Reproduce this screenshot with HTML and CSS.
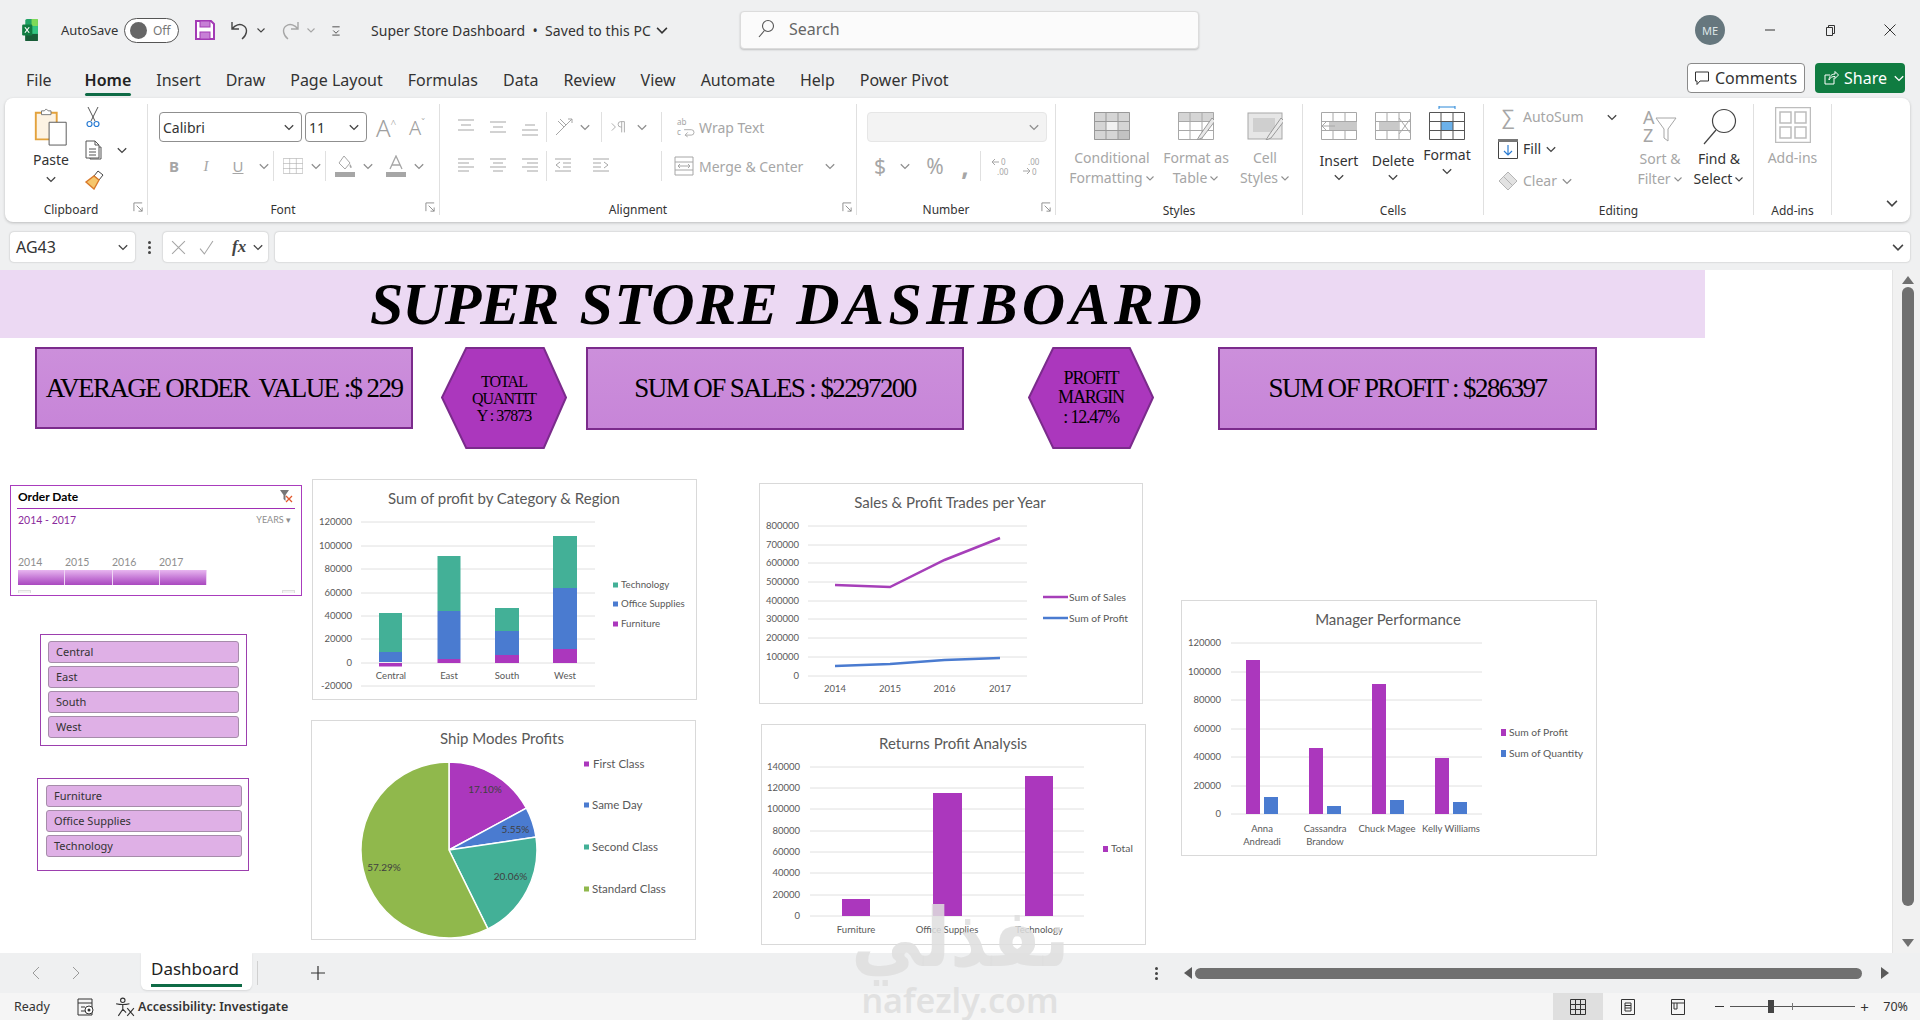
FILE: index.html
```html
<!DOCTYPE html>
<html lang="en">
<head>
<meta charset="utf-8">
<title>Super Store Dashboard</title>
<link rel="stylesheet" href="styles.css">
</head>
<body>
<svg class="defs" aria-hidden="true">
  <defs>
    <symbol id="chev" viewBox="0 0 10 10"><path d="M1.5 3.5 5 7l3.5-3.5" fill="none" stroke="currentColor" stroke-width="1.1"/></symbol>
    <symbol id="launch" viewBox="0 0 12 12"><path d="M1 10V1h9M4 4l6 6M10 6v4H6" fill="none" stroke="currentColor"/></symbol>
    <symbol id="al-top" viewBox="0 0 20 20"><path d="M2 3h16M5 8h10M2 13h16" stroke="currentColor" fill="none" stroke-width="1.2"/></symbol>
    <symbol id="al-mid" viewBox="0 0 20 20"><path d="M2 5h16M5 10h10M2 15h16" stroke="currentColor" fill="none" stroke-width="1.2"/></symbol>
    <symbol id="al-bot" viewBox="0 0 20 20"><path d="M5 8h10M2 13h16M2 18h16" stroke="currentColor" fill="none" stroke-width="1.2"/></symbol>
    <symbol id="al-left" viewBox="0 0 20 20"><path d="M2 3h16M2 7h11M2 11h16M2 15h11" stroke="currentColor" fill="none" stroke-width="1.2"/></symbol>
    <symbol id="al-center" viewBox="0 0 20 20"><path d="M2 3h16M5 7h10M2 11h16M5 15h10" stroke="currentColor" fill="none" stroke-width="1.2"/></symbol>
    <symbol id="al-right" viewBox="0 0 20 20"><path d="M2 3h16M7 7h11M2 11h16M7 15h11" stroke="currentColor" fill="none" stroke-width="1.2"/></symbol>
    <symbol id="grid" viewBox="0 0 36 28"><path d="M.5.5h35v27H.5zM12 .5v27M24 .5v27M.5 9.500h35M.5 18.500h35" fill="none" stroke="currentColor"/></symbol>
  </defs>
</svg>

<header class="titlebar">
  <div class="tb-left">
    <svg class="xl-logo" viewBox="0 0 20 28"><rect x="4" y="0" width="16" height="28" rx="2" fill="#21a366"/><rect x="12" y="0" width="8" height="9" fill="#7ed957"/><rect x="12" y="9" width="8" height="10" fill="#33c481"/><rect x="4" y="19" width="16" height="9" fill="#185c37"/><rect x="0" y="7" width="13" height="14" rx="1.500" fill="#107c41"/><path d="m3.500 10.500 5.500 7M9 10.500l-5.500 7" stroke="#fff" stroke-width="1.500"/></svg>
    <span class="autosave">AutoSave</span>
    <span class="toggle"><i class="knob"></i><b class="off">Off</b></span>
    <svg class="save" viewBox="0 0 20 20"><path d="M1 1h15l3 3v15H1z" fill="#fff" stroke="#a33bb5" stroke-width="2"/><rect x="5" y="1" width="10" height="6" fill="#c77fd6" stroke="#a33bb5"/><rect x="5" y="12" width="10" height="7" fill="#c77fd6" stroke="#a33bb5"/></svg>
    <svg class="qa undo" viewBox="0 0 20 20"><path d="M2 2v7h7M2 9c3-4 8-6 12-3 4 3 3 9-2 13" fill="none" stroke="#444" stroke-width="1.400"/></svg>
    <svg class="qc"><use href="#chev"/></svg>
    <svg class="qa redo" viewBox="0 0 20 20"><path d="M18 2v7h-7M18 9c-3-4-8-6-12-3-4 3-3 9 2 13" fill="none" stroke="#a6a6a6" stroke-width="1.400"/></svg>
    <svg class="qc dim"><use href="#chev"/></svg>
    <svg class="qm" viewBox="0 0 10 12"><path d="M1 2h8M2 6l3 3 3-3M1 11h8" fill="none" stroke="#444"/></svg>
    <span class="doc">Super Store Dashboard&nbsp; •&nbsp; Saved to this PC</span>
    <svg class="doc-chev"><use href="#chev"/></svg>
  </div>
  <div class="search">
    <svg class="search-ic" viewBox="0 0 18 20"><circle cx="11" cy="7" r="5.500" fill="none" stroke="#555" stroke-width="1.100"/><path d="M7.500 11.500 2 18" stroke="#555" stroke-width="1.100"/></svg>
    <span>Search</span>
  </div>
  <div class="tb-right">
    <span class="avatar">ME</span>
    <span class="win"><svg viewBox="0 0 14 14"><path d="M2 7h10" stroke="#333"/></svg></span>
    <span class="win"><svg viewBox="0 0 14 14"><path d="M3.500 4.500h6v8h-6zM5.500 4.500v-2h6v8h-2" fill="none" stroke="#333"/></svg></span>
    <span class="win"><svg viewBox="0 0 14 14"><path d="m1.500 1.500 11 11M12.500 1.500l-11 11" stroke="#333"/></svg></span>
  </div>
</header>

<nav class="tabs">
  <a>File</a><a class="on">Home</a><a>Insert</a><a>Draw</a><a>Page Layout</a><a>Formulas</a><a>Data</a><a>Review</a><a>View</a><a>Automate</a><a>Help</a><a>Power Pivot</a>
  <div class="tab-btns">
    <button class="comments"><svg viewBox="0 0 16 16"><path d="M1.500 2h13v9H6l-3 3.500V11H1.500z" fill="none" stroke="#333"/></svg>Comments</button>
    <button class="share"><svg viewBox="0 0 16 16"><path d="M11 8v6H2V5h5M6 10c0-4 3-6 6-6V1.500L15.500 5 12 8.500V6.500c-3 0-5 1-6 3.500z" fill="none" stroke="#fff"/></svg>Share<svg class="share-ch"><use href="#chev"/></svg></button>
  </div>
</nav>

<section class="ribbon">
  <div class="group g-clip">
    <div class="body clip-body">
      <div class="paste">
        <svg class="paste-ic" viewBox="0 0 34 40"><path d="M1 5h22v28H1z" fill="#fdf3e3" stroke="#e3a23c" stroke-width="2"/><path d="M7 7V3h3l2-2 2 2h3v4z" fill="#fff" stroke="#777"/><path d="M15 15h18v24H15z" fill="#fff" stroke="#555"/></svg>
        <span>Paste</span>
        <svg class="chev"><use href="#chev"/></svg>
      </div>
      <div class="clip-tools">
        <svg class="ct cut" viewBox="0 0 14 22"><path d="M2 1l7 14M12 1 5 15" stroke="#555" fill="none"/><circle cx="3.500" cy="18" r="2.500" fill="none" stroke="#2b7cd3" stroke-width="1.200"/><circle cx="10.500" cy="18" r="2.500" fill="none" stroke="#2b7cd3" stroke-width="1.200"/></svg>
        <div class="ct-row"><svg class="ct" viewBox="0 0 20 20"><path d="M2 1h9v4h4v13H2zM11 1l4 4M6 18v1h11V7h-2M5 9h7M5 12h7M5 15h7" fill="none" stroke="#555"/></svg><svg class="chev"><use href="#chev"/></svg></div>
        <svg class="ct" viewBox="0 0 20 20"><path d="M14 1l5 4-4 5-5-4z" fill="#fff" stroke="#444"/><path d="M10 6l5 4-5 9L2 12z" fill="#f6c66b" stroke="#d9792a" stroke-width="1.400"/></svg>
      </div>
    </div>
    <div class="label">Clipboard<svg class="launch"><use href="#launch"/></svg></div>
  </div>

  <div class="group g-font">
    <div class="body rows">
      <div class="row">
        <div class="combo wide">Calibri<svg class="chev dark"><use href="#chev"/></svg></div>
        <div class="combo narrow">11<svg class="chev dark"><use href="#chev"/></svg></div>
        <span class="big-a">A<sup>^</sup></span><span class="big-a small">A<sup>ˇ</sup></span>
      </div>
      <div class="row dim">
        <b class="t fb">B</b><i class="t fi">I</i><u class="t fu">U</u><svg class="chev"><use href="#chev"/></svg>
        <span class="vline"></span>
        <svg class="ic"><use href="#grid"/></svg><svg class="chev"><use href="#chev"/></svg>
        <span class="vline"></span>
        <svg class="ic fill-ic" viewBox="0 0 20 22"><path d="M9 1l6 7-5 6-6-6z" fill="none" stroke="#a6a6a6"/><path d="M15 9c2 2 2 4 1 4s-2-2-1-4z" fill="#a6a6a6"/><rect y="17" width="20" height="5" fill="#a6a6a6"/></svg><svg class="chev"><use href="#chev"/></svg>
        <svg class="ic color-ic" viewBox="0 0 20 22"><path d="M4 14 10 1l6 13M6 10h8" fill="none" stroke="#a6a6a6" stroke-width="1.300"/><rect y="17" width="20" height="5" fill="#a6a6a6"/></svg><svg class="chev"><use href="#chev"/></svg>
      </div>
    </div>
    <div class="label">Font<svg class="launch"><use href="#launch"/></svg></div>
  </div>

  <div class="group g-align">
    <div class="body rows">
      <div class="row dim">
        <svg class="ic a"><use href="#al-top"/></svg><svg class="ic a"><use href="#al-mid"/></svg><svg class="ic a"><use href="#al-bot"/></svg>
        <span class="vline"></span>
        <svg class="ic orient" viewBox="0 0 20 20"><path d="M2 18 18 2M14 2h4v4M4 4l6 6M6 2l6 6" fill="none" stroke="#a6a6a6"/></svg><svg class="chev ch-o"><use href="#chev"/></svg>
        <span class="vline"></span>
        <svg class="ic rtl" viewBox="0 0 20 20"><path d="M2 6l4 4-4 4M13 4v12M16 4v12M16 4h-4a3 3 0 0 0 0 6h1" fill="none" stroke="#a6a6a6"/></svg><svg class="chev ch-r"><use href="#chev"/></svg>
        <span class="vline"></span>
        <svg class="ic wrap" viewBox="0 0 20 22"><text x="1" y="9" class="wrap-t">ab</text><text x="1" y="20" class="wrap-t">c</text><path d="M9 14h8a2 2 0 0 1 0 6h-6M13 17l-3 3 3 2" fill="none" stroke="#a6a6a6"/></svg><span class="tool-text">Wrap Text</span>
      </div>
      <div class="row dim">
        <svg class="ic a"><use href="#al-left"/></svg><svg class="ic a"><use href="#al-center"/></svg><svg class="ic a"><use href="#al-right"/></svg>
        <span class="vline"></span>
        <svg class="ic a ind" viewBox="0 0 20 20"><path d="M2 3h16M10 7h8M10 11h8M2 15h16M7 6 3 9l4 3" fill="none" stroke="#a6a6a6"/></svg><svg class="ic a ind ind2" viewBox="0 0 20 20"><path d="M2 3h16M2 7h8M2 11h8M2 15h16M13 6l4 3-4 3" fill="none" stroke="#a6a6a6"/></svg>
        <span class="vline v-far"></span>
        <svg class="ic merge" viewBox="0 0 20 20"><path d="M1 1h18v18H1zM1 6h18M1 14h18M4 10h12M4 10l2-2M4 10l2 2M16 10l-2-2M16 10l-2 2" fill="none" stroke="#a6a6a6"/></svg><span class="tool-text">Merge &amp; Center</span><svg class="chev merge-ch"><use href="#chev"/></svg>
      </div>
    </div>
    <div class="label">Alignment<svg class="launch"><use href="#launch"/></svg></div>
  </div>

  <div class="group g-num">
    <div class="body rows">
      <div class="row"><div class="combo disabled"><svg class="chev"><use href="#chev"/></svg></div></div>
      <div class="row dim">
        <span class="t big">$</span><svg class="chev"><use href="#chev"/></svg>
        <span class="t big pct">%</span><span class="t big comma">,</span>
        <span class="vline"></span>
        <svg class="ic dec" viewBox="0 0 20 20"><path d="M1 6h7M1 6l3-3M1 6l3 3" fill="none" stroke="#a6a6a6"/><text x="10" y="9" class="dec-t">0</text><text x="6" y="19" class="dec-t">.00</text></svg>
        <svg class="ic dec" viewBox="0 0 20 20"><text x="6" y="9" class="dec-t">.00</text><path d="M1 15h7M8 15l-3-3M8 15l-3 3" fill="none" stroke="#a6a6a6"/><text x="10" y="19" class="dec-t">0</text></svg>
      </div>
    </div>
    <div class="label">Number<svg class="launch"><use href="#launch"/></svg></div>
  </div>

  <div class="group g-styles">
    <div class="body bigs dim">
      <div class="big-tool w-cf"><svg class="big-ic" viewBox="0 0 36 28"><rect width="36" height="28" fill="#d5d5d5"/><rect x="12" y="9" width="12" height="9" fill="#f1f1f1"/><rect x="24" y="18" width="12" height="10" fill="#c2c2c2"/><use href="#grid" width="36" height="28" color="#999"/></svg><span>Conditional<br>Formatting<svg class="chev inl"><use href="#chev"/></svg></span></div>
      <div class="big-tool w-ft"><svg class="big-ic" viewBox="0 0 36 28"><rect width="36" height="9" fill="#d5d5d5"/><use href="#grid" width="36" height="28" color="#a8a8a8"/><path d="M34 6 22 23l-3 5 5-2L37 9z" fill="#e8e8e8" stroke="#999"/></svg><span>Format as<br>Table<svg class="chev inl"><use href="#chev"/></svg></span></div>
      <div class="big-tool w-cs"><svg class="big-ic" viewBox="0 0 36 28"><rect x="1" y="1" width="34" height="26" fill="#e6e6e6" stroke="#a8a8a8"/><rect x="6" y="6" width="22" height="14" fill="#cfcfcf"/><path d="M34 6 22 23l-3 5 5-2L37 9z" fill="#e8e8e8" stroke="#999"/></svg><span>Cell<br>Styles<svg class="chev inl"><use href="#chev"/></svg></span></div>
    </div>
    <div class="label low">Styles</div>
  </div>

  <div class="group g-cells">
    <div class="body bigs cells">
      <div class="big-tool w-cell dim"><svg class="big-ic" viewBox="0 0 36 28"><use href="#grid" width="36" height="28" color="#a8a8a8"/><rect x="8" y="10" width="28" height="8" fill="#c9c9c9"/><path d="M14 14H1M6 9l-5 5 5 5" fill="none" stroke="#a8a8a8"/></svg><span class="lower">Insert</span><svg class="chev"><use href="#chev"/></svg></div>
      <div class="big-tool w-cell dim"><svg class="big-ic" viewBox="0 0 36 28"><use href="#grid" width="36" height="28" color="#a8a8a8"/><rect x="4" y="10" width="20" height="8" fill="#c9c9c9"/><path d="m24 6 12 16M36 6 24 22" stroke="#a8a8a8"/></svg><span class="lower">Delete</span><svg class="chev"><use href="#chev"/></svg></div>
      <div class="big-tool w-cell"><svg class="big-ic fmt-ic" viewBox="0 0 36 34"><path d="M10 1h16M10 0v3M26 0v3" stroke="#2b88d8"/><rect x="12" y="15" width="12" height="9" fill="#6cb1ea"/><g transform="translate(0 6)"><use href="#grid" width="36" height="28" color="#555"/></g></svg><span>Format</span><svg class="chev"><use href="#chev"/></svg></div>
    </div>
    <div class="label low">Cells</div>
  </div>

  <div class="group g-edit">
    <div class="body edit-body">
      <div class="edit-col">
        <div class="edit-row dim"><span class="sigma">∑</span><span>AutoSum</span><svg class="chev as-ch dark"><use href="#chev"/></svg></div>
        <div class="edit-row"><svg class="fill-down" viewBox="0 0 20 20"><path d="M.500.500h19v19H.500z" fill="#fff" stroke="#444"/><rect width="20" height="3" fill="#777"/><path d="M10 6v10M6 12l4 4 4-4" fill="none" stroke="#2b7cd3" stroke-width="1.200"/></svg><span>Fill</span><svg class="chev dark"><use href="#chev"/></svg></div>
        <div class="edit-row dim"><svg class="eraser" viewBox="0 0 20 20"><path d="m10 1 9 9-9 9-9-9z" fill="#e2e2e2" stroke="#b5b5b5"/><path d="m5.500 5.500 9 9" stroke="#b5b5b5"/></svg><span>Clear</span><svg class="chev"><use href="#chev"/></svg></div>
      </div>
      <div class="big-tool w-sort dim"><svg class="big-ic sort-ic" viewBox="0 0 36 36"><text x="1" y="16" class="az">A</text><text x="1" y="34" class="az">Z</text><path d="M14 10h20l-8 11v12l-4-3v-9z" fill="none" stroke="#a6a6a6"/></svg><span>Sort &amp;<br>Filter<svg class="chev inl"><use href="#chev"/></svg></span></div>
      <div class="big-tool w-find"><svg class="big-ic sort-ic" viewBox="0 0 36 36"><circle cx="23" cy="13" r="11.500" fill="none" stroke="#444" stroke-width="1.200"/><path d="M15 22 3 36" stroke="#444" stroke-width="1.200"/></svg><span>Find &amp;<br>Select<svg class="chev inl dark"><use href="#chev"/></svg></span></div>
    </div>
    <div class="label low">Editing</div>
  </div>

  <div class="group g-add">
    <div class="body bigs dim">
      <div class="big-tool w-add"><svg class="add-ic" viewBox="0 0 36 36"><path d="M.500.500h35v35H.500z" fill="none" stroke="#bdbdbd" stroke-width="1.500"/><path d="M5 5h11v11H5zM20 5h11v11H20zM5 20h11v11H5zM20 20h11v11H20z" fill="none" stroke="#bdbdbd" stroke-width="1.500"/></svg><span>Add-ins</span></div>
    </div>
    <div class="label low">Add-ins</div>
  </div>
  <svg class="collapse"><use href="#chev"/></svg>
</section>

<section class="formula">
  <div class="namebox">AG43<svg class="chev dark"><use href="#chev"/></svg></div>
  <div class="dots"><i></i><i></i><i></i></div>
  <div class="fx-box">
    <svg viewBox="0 0 14 14"><path d="m1 1 12 12M13 1 1 13" stroke="#a6a6a6"/></svg>
    <svg viewBox="0 0 14 14"><path d="m1 8 4 5 8-12" stroke="#a6a6a6" fill="none"/></svg>
    <em>fx</em>
    <svg class="chev dark"><use href="#chev"/></svg>
  </div>
  <div class="input"><svg class="chev dark"><use href="#chev"/></svg></div>
</section>

<main class="sheet">
  <div class="canvas">
    <div class="band"><h1><span class="w1">SUPER</span> <span class="w2">STORE</span> <span class="w3">DASHBOARD</span></h1></div>

    <div class="kpi k1">AVERAGE ORDER&nbsp; VALUE :$ 229</div>
    <div class="hex h1"><svg viewBox="0 0 125 101" preserveAspectRatio="none"><polygon points="25,1 102,1 124,50 102,100 25,100 1,50"/></svg><span>TOTAL<br>QUANTIT<br>Y : 37873</span></div>
    <div class="kpi k2">SUM OF SALES : $2297200</div>
    <div class="hex h2"><svg viewBox="0 0 125 101" preserveAspectRatio="none"><polygon points="25,1 101,1 124,50 101,100 25,100 1,50"/></svg><span>PROFIT<br>MARGIN<br>: 12.47%</span></div>
    <div class="kpi k3">SUM OF PROFIT : $286397</div>

    <div class="timeline">
      <div class="tl-head"><b>Order Date</b><svg viewBox="0 0 14 14"><path d="M1 1h9L6.500 6v6L4.500 10V6z" fill="#777"/><path d="m7 7 6 6M13 7l-6 6" stroke="#e2582c" stroke-width="1.300"/></svg></div>
      <div class="tl-sub"><span>2014 - 2017</span><small>YEARS ▾</small></div>
      <div class="tl-years"><span>2014</span><span>2015</span><span>2016</span><span>2017</span></div>
      <div class="tl-bar"><i></i><i></i><i></i><i></i></div>
      <div class="tl-handles"><i></i><i></i></div>
    </div>

    <div class="slicer s-region"><div class="sl-btn">Central</div><div class="sl-btn">East</div><div class="sl-btn">South</div><div class="sl-btn">West</div></div>
    <div class="slicer s-cat"><div class="sl-btn">Furniture</div><div class="sl-btn">Office Supplies</div><div class="sl-btn">Technology</div></div>

    <figure class="chart c-cat">
      <svg viewBox="312 479 385 221">
        <text class="ttl mid" x="504" y="498">Sum of profit by Category &amp; Region</text>
        <path class="gl" d="M361 522h234M361 546h234M361 569h234M361 593h234M361 616h234M361 639h234M361 663h234M361 686h234"/>
        <g class="ax end"><text x="352" y="522">120000</text><text x="352" y="546">100000</text><text x="352" y="569">80000</text><text x="352" y="593">60000</text><text x="352" y="616">40000</text><text x="352" y="639">20000</text><text x="352" y="663">0</text><text x="352" y="686">-20000</text></g>
        <g class="pur"><rect x="379" y="663" width="23" height="3.500"/><rect x="437.500" y="659" width="23" height="4"/><rect x="495" y="655" width="24" height="8"/><rect x="553" y="649" width="24" height="14"/></g>
        <g class="blu"><rect x="379" y="652" width="23" height="10"/><rect x="437.500" y="611" width="23" height="48"/><rect x="495" y="631" width="24" height="24"/><rect x="553" y="588" width="24" height="61"/></g>
        <g class="grn"><rect x="379" y="613" width="23" height="39"/><rect x="437.500" y="556" width="23" height="55"/><rect x="495" y="608" width="24" height="23"/><rect x="553" y="536" width="24" height="52"/></g>
        <g class="ax mid"><text x="391" y="676">Central</text><text x="449" y="676">East</text><text x="507" y="676">South</text><text x="565" y="676">West</text></g>
        <rect class="grn" x="613" y="582.500" width="5" height="5"/><rect class="blu" x="613" y="601.500" width="5" height="5"/><rect class="pur" x="613" y="621.500" width="5" height="5"/>
        <g class="ax lg"><text x="621" y="585">Technology</text><text x="621" y="604">Office Supplies</text><text x="621" y="624">Furniture</text></g>
      </svg>
    </figure>

    <figure class="chart c-sales">
      <svg viewBox="759 483 384 221">
        <text class="ttl mid" x="950" y="502">Sales &amp; Profit Trades per Year</text>
        <path class="gl" d="M808 526h219M808 545h219M808 563h219M808 582h219M808 601h219M808 619h219M808 638h219M808 657h219M808 676h219"/>
        <g class="ax end"><text x="799" y="526">800000</text><text x="799" y="545">700000</text><text x="799" y="563">600000</text><text x="799" y="582">500000</text><text x="799" y="601">400000</text><text x="799" y="619">300000</text><text x="799" y="638">200000</text><text x="799" y="657">100000</text><text x="799" y="676">0</text></g>
        <polyline class="ln-p" points="835,585 890,587 944.500,560 1000,538"/>
        <polyline class="ln-b" points="835,666 890,664 944.500,660 1000,658"/>
        <g class="ax mid"><text x="835" y="689">2014</text><text x="890" y="689">2015</text><text x="944.500" y="689">2016</text><text x="1000" y="689">2017</text></g>
        <path class="ln-p" d="M1043 597h25"/><path class="ln-b" d="M1043 618h25"/>
        <g class="ax lg ln"><text x="1069" y="598">Sum of Sales</text><text x="1069" y="619">Sum of Profit</text></g>
      </svg>
    </figure>

    <figure class="chart c-ship">
      <svg viewBox="311 720 385 220">
        <text class="ttl mid" x="502" y="738">Ship Modes Profits</text>
        <path class="pur wedge" d="M449 850V762A88 88 0 0 1 526.400 808.100Z"/>
        <path class="blu wedge" d="M449 850 526.400 808.100A88 88 0 0 1 536 837.100Z"/>
        <path class="grn wedge" d="M449 850 536 837.100A88 88 0 0 1 487.900 928.900Z"/>
        <path class="lim wedge" d="M449 850 487.900 928.900A88 88 0 1 1 449 762Z"/>
        <g class="ax mid pct"><text x="485" y="790">17.10%</text><text x="515.500" y="830">5.55%</text><text x="510.500" y="877">20.06%</text><text x="384" y="868">57.29%</text></g>
        <rect class="pur" x="584" y="761.500" width="5" height="5"/><rect class="blu" x="584" y="802.500" width="5" height="5"/><rect class="grn" x="584" y="844.500" width="5" height="5"/><rect class="lim" x="584" y="886.500" width="5" height="5"/>
        <g class="ax lg sp"><text x="593" y="764">First Class</text><text x="592" y="805">Same Day</text><text x="592" y="847">Second Class</text><text x="592" y="889">Standard Class</text></g>
      </svg>
    </figure>

    <figure class="chart c-ret">
      <svg viewBox="761 724 385 221">
        <text class="ttl mid" x="953" y="743">Returns Profit Analysis</text>
        <path class="gl" d="M810 767h274M810 788h274M810 809h274M810 831h274M810 852h274M810 873h274M810 895h274M810 916h274"/>
        <g class="ax end"><text x="800" y="767">140000</text><text x="800" y="788">120000</text><text x="800" y="809">100000</text><text x="800" y="831">80000</text><text x="800" y="852">60000</text><text x="800" y="873">40000</text><text x="800" y="895">20000</text><text x="800" y="916">0</text></g>
        <g class="pur"><rect x="842" y="899" width="28" height="17"/><rect x="933" y="793" width="29" height="123"/><rect x="1025" y="776" width="28" height="140"/></g>
        <g class="ax mid"><text x="856" y="930">Furniture</text><text x="947" y="930">Office Supplies</text><text x="1039" y="930">Technology</text></g>
        <rect class="pur" x="1103" y="846" width="5" height="6"/>
        <g class="ax lg ln"><text x="1111" y="849">Total</text></g>
      </svg>
    </figure>

    <figure class="chart c-mgr">
      <svg viewBox="1181 600 416 256">
        <text class="ttl mid" x="1388" y="619">Manager Performance</text>
        <path class="gl" d="M1231 643h251M1231 672h251M1231 700h251M1231 729h251M1231 757h251M1231 786h251M1231 814h251"/>
        <g class="ax end"><text x="1221" y="643">120000</text><text x="1221" y="672">100000</text><text x="1221" y="700">80000</text><text x="1221" y="729">60000</text><text x="1221" y="757">40000</text><text x="1221" y="786">20000</text><text x="1221" y="814">0</text></g>
        <g class="pur"><rect x="1246" y="660" width="14" height="154"/><rect x="1309" y="748" width="14" height="66"/><rect x="1372" y="684" width="14" height="130"/><rect x="1435" y="758" width="14" height="56"/></g>
        <g class="blu"><rect x="1264" y="797" width="14" height="17"/><rect x="1327" y="806" width="14" height="8"/><rect x="1390" y="800" width="14" height="14"/><rect x="1453" y="802" width="14" height="12"/></g>
        <g class="ax mid nm"><text x="1262" y="829">Anna</text><text x="1262" y="842">Andreadi</text><text x="1325" y="829">Cassandra</text><text x="1325" y="842">Brandow</text><text x="1387" y="829">Chuck Magee</text><text x="1451" y="829">Kelly Williams</text></g>
        <rect class="pur" x="1501" y="729" width="5" height="7"/><rect class="blu" x="1501" y="750" width="5" height="7"/>
        <g class="ax lg ln"><text x="1509" y="733">Sum of Profit</text><text x="1509" y="754">Sum of Quantity</text></g>
      </svg>
    </figure>
  </div>
  <aside class="vscroll"><i class="arrow-up"></i><i class="v-thumb"></i><i class="arrow-down"></i></aside>
</main>

<footer class="sheettabs">
  <svg class="nav" viewBox="0 0 10 16"><path d="M8 2 2 8l6 6" fill="none" stroke="#9a9a9a"/></svg>
  <svg class="nav n2" viewBox="0 0 10 16"><path d="m2 2 6 6-6 6" fill="none" stroke="#9a9a9a"/></svg>
  <div class="sheet-tab"><span>Dashboard</span></div>
  <span class="tab-sep"></span>
  <svg class="plus" viewBox="0 0 14 14"><path d="M7 0v14M0 7h14" stroke="#333" stroke-width="1.200"/></svg>
  <div class="dots d2"><i></i><i></i><i></i></div>
  <i class="arrow-left"></i>
  <i class="h-thumb"></i>
  <i class="arrow-right"></i>
</footer>

<footer class="status">
  <span class="ready">Ready</span>
  <svg class="st-ic macro" viewBox="0 0 18 18"><path d="M1 1h14v16H1zM1 5h14M4 9h4M4 13h4" fill="none" stroke="#333"/><circle cx="12" cy="12" r="4" fill="#fff" stroke="#333"/><circle cx="12" cy="12" r="1.500" fill="#333"/></svg>
  <svg class="st-ic acc" viewBox="0 0 18 18"><circle cx="7" cy="3" r="2" fill="none" stroke="#333"/><path d="M1 6c4 1 8 1 12 0M7 7v4L3 17M7 11l3 3M11 10l6 7M17 10l-6 7" fill="none" stroke="#333"/></svg>
  <b class="acc-text">Accessibility: Investigate</b>
  <div class="views">
    <span class="view on"><svg viewBox="0 0 16 16"><path d="M.500.500h15v15H.500zM5.500.500v15M10.500.500v15M.500 5.500h15M.500 10.500h15" fill="none" stroke="#333"/></svg></span>
    <span class="view"><svg viewBox="0 0 16 16"><path d="M1.500.500h13v15h-13zM5 4h6v8H5zM5 6.500h6M5 9h6" fill="none" stroke="#333"/></svg></span>
    <span class="view"><svg viewBox="0 0 16 16"><path d="M1.500.500h13v15h-13zM1.500 4h13M7 4v6H4V4" fill="none" stroke="#333"/></svg></span>
  </div>
  <span class="z-minus"></span>
  <div class="zoom-track"><i class="z-tick"></i><i class="z-thumb"></i></div>
  <span class="z-plus">+</span>
  <span class="z-val">70%</span>
</footer>

<div class="watermark" aria-hidden="true"><span class="wm-ar" lang="ar" dir="rtl">نفذلي</span><span class="wm-en">nafezly.com</span></div>
</body>
</html>
```

FILE: styles.css
```css
*{box-sizing:border-box}
html,body{margin:0;padding:0;height:1020px;overflow:hidden}
body{position:relative;background:#eff0f1;color:#333;font-family:"Noto Sans","Open Sans",sans-serif;font-size:14px}
.defs{position:absolute;width:0;height:0}
svg{display:block;flex:none}
.chev{width:12px;height:12px;color:#8f8f8f}
.chev.dark{color:#444}
.dim{color:#a6a6a6}

/* title bar */
.titlebar{height:60px;display:grid;grid-template-columns:740px 459px 1fr;align-items:start}
.tb-left{display:flex;align-items:center;height:60px;padding-left:20px}
.xl-logo{width:20px;height:22px}
.autosave{margin-left:21px;font-size:13px;width:55px}
.toggle{margin-left:8px;width:55px;height:25px;border:1px solid #555;border-radius:13px;display:flex;align-items:center;padding:0 5px;background:#fff}
.knob{width:17px;height:17px;border-radius:50%;background:#666}
.off{font-weight:400;font-size:12px;margin-left:6px;color:#777}
.save{width:20px;height:20px;margin-left:16px}
.qa{width:20px;height:20px}
.undo{margin-left:15px}
.redo{margin-left:14px}
.qc{width:10px;height:10px;margin-left:6px;color:#444}
.qc.dim{color:#a6a6a6}
.qm{width:10px;height:11px;margin-left:15px}
.doc{margin-left:30px;font-size:14px;white-space:nowrap;letter-spacing:.05px}
.doc-chev{width:14px;height:14px;margin-left:4px;color:#333}
.search{margin-top:11px;height:38px;background:#fbfbfb;border:1px solid #dcdcdc;border-radius:4px;box-shadow:0 1px 2px rgba(0,0,0,.2);display:flex;align-items:center;padding:0 0 2px 16px;gap:14px;color:#666;font-size:16px}
.search-ic{width:18px;height:22px}
.tb-right{display:flex;align-items:center;height:60px;padding-left:496px}
.avatar{width:30px;height:30px;border-radius:50%;background:#66777e;color:#dfe6e8;font-size:11px;display:flex;align-items:center;justify-content:center}
.win{width:60px;display:flex;justify-content:center;margin-left:0}
.avatar + .win{margin-left:15px}
.win svg{width:14px;height:14px}

/* tabs */
.tabs{height:38px;display:flex;align-items:center;padding-left:26px;gap:25px;font-size:16px;color:#333}
.tabs a{position:relative;white-space:nowrap;line-height:24px;margin-top:2px}
.tabs a.on{font-weight:600;color:#222;margin-left:8px}
.tabs a.on::after{content:"";position:absolute;left:0;right:0;bottom:-4px;height:3px;background:#0f6b46;border-radius:2px}
.tab-btns{margin-left:auto;margin-right:15px;display:flex;gap:10px;align-items:center;margin-top:-2px}
.tab-btns button{font:inherit;height:30px;border-radius:4px;display:flex;align-items:center;padding:0;white-space:nowrap}
.comments{width:118px;background:#fff;border:1px solid #8a8a8a;color:#333;padding-left:6px!important;gap:5px}
.comments svg{width:16px;height:16px}
.share{width:90px;background:#107c41;border:0;color:#fff;padding-left:8px!important;gap:5px}
.share svg{width:16px;height:16px}
.share .share-ch{width:12px;height:12px;color:#fff;margin-left:1px}

/* ribbon */
.ribbon{position:relative;height:124px;margin:0 10px 0 5px;background:#fff;border-radius:8px;box-shadow:0 1px 3px rgba(0,0,0,.22);display:flex;padding:6px 0 7px}
.group{display:flex;flex-direction:column;border-right:1px solid #e0e0e0;position:relative;flex:none}
.g-clip{width:143px}.g-font{width:292px}.g-align{width:417px}.g-num{width:199px}.g-styles{width:247px}.g-cells{width:181px}.g-edit{width:270px}.g-add{width:78px}
.body{flex:1;min-height:0}
.label{height:15px;font-size:12px;line-height:15px;text-align:center;color:#333;position:relative;top:2px;padding-right:10px}
.g-font .label{padding-right:21px}
.g-align .label,.g-num .label{padding-right:20px}
.label.low{top:3px;padding-right:0}
.launch{position:absolute;right:3px;top:0;width:11px;height:11px;color:#8a8a8a}
.collapse{position:absolute;right:11px;bottom:12px;width:14px;height:14px;color:#444}

.clip-body{display:flex;padding-left:15px}
.paste{width:62px;display:flex;flex-direction:column;align-items:center;padding-top:4px;font-size:14px}
.paste-ic{width:34px;height:38px}
.paste span{margin-top:4px;line-height:20px}
.paste .chev{margin-top:3px;color:#444}
.clip-tools{padding-left:2px;display:flex;flex-direction:column}
.ct{width:20px;height:20px;margin-bottom:12px}
.ct.cut{margin-left:2px;margin-top:2px;height:22px;width:14px;margin-bottom:10px}
.ct-row{display:flex;gap:5px;height:20px;align-items:center;margin-top:2px;margin-bottom:10px}
.ct-row .ct{margin:0}
.ct-row .chev{margin-left:7px;color:#444}

.rows{display:flex;flex-direction:column;gap:9px;padding:8px 0 0 10px}
.row{display:flex;align-items:center;height:30px}
.combo{height:30px;border:1px solid #8f8f8f;border-radius:4px;display:flex;align-items:center;justify-content:space-between;padding:0 3px;font-size:14px;color:#333}
.wide{width:143px;margin-left:1px}
.narrow{width:62px;margin-left:3px}
.big-a{font-size:24px;color:#a0a0a0;margin-left:9px;width:26px;font-weight:300}
.big-a.small{font-size:20px;margin-left:7px}
.big-a sup{font-size:10px;line-height:0}
.t{width:32px;text-align:center;font-size:15px;color:#a6a6a6;display:block}
.fb{font-family:"Noto Sans",sans-serif}
.fi{font-family:"Liberation Serif",serif}
.vline{width:1px;height:30px;background:#e0e0e0;flex:none}
.ic{width:20px;height:20px;color:#a6a6a6}
.row .chev{margin:0 3px 0 4px}
.g-font .ic{margin-left:9px}
.g-font .ic + .chev{margin-left:7px}
.fill-ic,.color-ic{height:22px}
.a{width:20px;margin:0 6px 0 6px}
.g-align .orient{margin-left:7px}
.row .ch-o{margin:0 10px 0 5px}
.g-align .rtl{margin-left:8px;width:18px}
.row .ch-r{margin:0 13px 0 8px}
.g-align .wrap{margin-left:14px;width:18px;overflow:visible}
.wrap-t{font-size:9px;fill:#a6a6a6}
.tool-text{font-size:14px;color:#a6a6a6;margin-left:5px;white-space:nowrap}
.g-align .ind2{margin-left:12px}
.v-far{margin-left:44px}
.g-align .merge{margin-left:12px}
.row .merge-ch{margin-left:21px}
.g-num .combo.disabled{width:180px;background:#f3f3f3;border-color:#e6e6e6;justify-content:flex-end}
.big{font-size:21px;width:30px}
.g-num .row:last-child{margin-left:-2px}
.pct{margin-left:6px}
.comma{font-weight:700;font-size:26px;line-height:20px}
.dec{margin-left:9px;width:22px;overflow:visible}
.dec-t{font-size:8px;fill:#a6a6a6}

.bigs{display:flex;padding-top:8px}
.big-tool{display:flex;flex-direction:column;align-items:center;text-align:center;font-size:14px;line-height:20px;flex:none}
.big-tool span{white-space:nowrap}
.big-ic{width:36px;height:28px;margin-bottom:8px;color:#a8a8a8}
.inl{display:inline-block;width:10px;height:10px;margin-left:2px;vertical-align:0}
.g-styles .bigs{padding-left:11px}
.w-cf{width:90px}.w-ft{width:78px}.w-cs{width:60px}
.cells{padding-left:9px;padding-top:8px}
.w-cell{width:54px;color:#333}
.w-cell.dim{color:#333}
.w-cell .chev{color:#444}
.lower{margin-top:3px}
.fmt-ic{height:34px;margin-top:-6px;margin-bottom:5px}
.edit-body{display:flex;padding-left:14px}
.edit-col{width:132px;display:flex;flex-direction:column;gap:11px;padding-top:2px}
.edit-row{display:flex;align-items:center;height:21px;font-size:14px;position:relative;gap:5px;white-space:nowrap}
.edit-row .chev{margin-left:-1px}
.edit-row .as-ch{margin-left:17px}
.sigma{font-size:20px;width:20px;text-align:center;color:#a6a6a6}
.fill-down,.eraser{width:20px;height:20px}
.w-sort,.w-find{width:60px;padding-top:4px}
.w-find{width:58px;color:#333}
.big-ic.sort-ic{height:36px;margin-bottom:5px;overflow:visible}
.az{font-size:18px;fill:#a6a6a6}
.w-find span,.w-sort span{line-height:20px}
.g-add .bigs{padding-top:3px;justify-content:center}
.add-ic{width:36px;height:36px;margin-bottom:5px}
.w-add{font-size:14px}

/* formula bar */
.formula{height:30px;margin:10px 10px 8px 10px;display:flex;align-items:stretch}
.namebox,.fx-box,.input{background:#fff;border-radius:4px;box-shadow:0 0 2px rgba(0,0,0,.28)}
.namebox{width:125px;display:flex;align-items:center;justify-content:space-between;padding:0 6px;font-size:16px}
.dots{width:28px;display:flex;flex-direction:column;gap:2px;align-items:center;justify-content:center}
.dots i{width:3px;height:3px;background:#444;border-radius:50%}
.fx-box{width:105px;display:flex;align-items:center;padding-left:8px;gap:13px}
.fx-box svg:not(.chev){width:15px;height:15px}
.fx-box em{font:italic 700 17px "Liberation Serif",serif;color:#444;width:16px;margin-left:5px}
.fx-box .chev{margin-left:-9px}
.input{flex:1;margin-left:7px;display:flex;align-items:center;justify-content:flex-end;padding-right:5px}
.input .chev{width:14px;height:14px}

/* sheet */
.sheet{height:683px;display:flex}
.canvas{position:relative;width:1893px;background:#fff;overflow:hidden;border-right:1px solid #e4e4e4}
.band{height:68px;width:1705px;background:#ecd9f3;padding-left:370px}
.band h1{margin:0;font:italic 700 60px/68px "Liberation Serif",serif;color:#000;white-space:nowrap;letter-spacing:-1px}
.w1{margin-right:7px}
.w2{margin-right:3px;letter-spacing:1.500px}
.w3{letter-spacing:4.450px}
.vscroll{flex:1;position:relative;background:#f1f1f1}
.v-thumb{position:absolute;left:9px;top:17px;width:12px;height:619px;background:#707070;border-radius:6px}
.arrow-up,.arrow-down{position:absolute;left:9px;width:0;height:0;border-left:6px solid transparent;border-right:6px solid transparent}
.arrow-up{top:6px;border-bottom:8px solid #707070}
.arrow-down{bottom:6px;border-top:8px solid #707070}

.kpi{position:absolute;top:77px;height:83px;background:linear-gradient(180deg,#cc8fdb,#c785d8);border:2px solid #7b2b8c;display:flex;align-items:center;justify-content:center;font:400 27px "Liberation Serif",serif;color:#000;white-space:nowrap;letter-spacing:-1.600px}
.k1{left:35px;width:378px;height:82px}
.k2{left:586px;width:378px}
.k3{left:1218px;width:379px}
.hex{position:absolute;top:77px;height:102px;display:flex;align-items:center;justify-content:center;text-align:center;font:400 16px/17px "Liberation Serif",serif;color:#000;letter-spacing:-1px}
.hex svg{position:absolute;inset:0;width:100%;height:100%}
.hex polygon{fill:#ab37bd;stroke:#7b2b8c;stroke-width:2}
.hex span{position:relative}
.h1{left:441px;width:126px}
.h2{left:1028px;width:126px;font-size:18px;line-height:19.500px;letter-spacing:-1.200px}

.timeline{position:absolute;left:10px;top:215px;width:292px;height:111px;border:1.500px solid #a93cbd;padding:0 6px;background:#fff}
.tl-head{height:23px;display:flex;justify-content:space-between;align-items:center;border-bottom:1px solid #a02fb4;font-size:11px;color:#000;font-family:Lato,sans-serif;padding-bottom:2px}
.tl-head b{font-size:12px;margin-left:1px}
.tl-head svg{width:14px;height:14px;margin-right:2px}
.tl-sub{display:flex;justify-content:space-between;align-items:center;margin:3px 0 0 1px;height:15px;font:10.500px Lato,sans-serif;color:#8a2a9c}
.tl-sub small{font-size:9px;color:#8e8e8e;margin-right:4px}
.tl-years{display:flex;margin:29px 0 0 1px;font:10.500px Lato,sans-serif;color:#8e8e8e}
.tl-years span{width:47px}
.tl-bar{display:flex;margin:2px 0 0 1px;width:189px;height:15px}
.tl-bar i{flex:1;background:linear-gradient(180deg,#e8b6f0,#c070d2 60%,#a948bf);border-right:1px solid #efd6f4}
.tl-handles{display:flex;justify-content:space-between;margin:5px 0 0 1px}
.tl-handles i{width:13px;height:3px;background:#f3f3f3;border:1px solid #ddd;border-bottom:0}

.slicer{position:absolute;background:#fff;border:1px solid #9c3fae;display:flex;flex-direction:column;gap:3px;padding-top:6px}
.s-region{left:40px;top:364px;width:207px;height:112px;padding-left:7px}
.s-cat{left:37px;top:508px;width:212px;height:93px;padding-left:8px}
.s-region .sl-btn{width:191px}
.s-cat .sl-btn{width:196px}
.sl-btn{height:22px;background:#dfb0e6;border:1px solid #a68caa;border-radius:3px;display:flex;align-items:center;padding:0 0 2px 7px;font:11px "Noto Sans",sans-serif;color:#333}

.chart{position:absolute;margin:0;background:#fff;outline:1px solid #d9d9d9;outline-offset:-1px}
.chart svg{width:100%;height:100%}
.c-cat{left:312px;top:209px;width:385px;height:221px}
.c-sales{left:759px;top:213px;width:384px;height:221px}
.c-ship{left:311px;top:450px;width:385px;height:220px}
.c-ret{left:761px;top:454px;width:385px;height:221px}
.c-mgr{left:1181px;top:330px;width:416px;height:256px}
.ttl{font:15px Lato,sans-serif;fill:#595959;dominant-baseline:central}
.ax text{font:9.500px Lato,sans-serif;fill:#595959;dominant-baseline:central;transform:translateY(-1px)}
.ax.lg text{font-size:9.700px}
.ax.lg.ln text{font-size:10.300px}
.ax.lg.sp text{font-size:11.500px}
.ax.pct text{fill:#404040;font-size:10px}
.mid,.mid text{text-anchor:middle}
.end text{text-anchor:end}
.gl{stroke:#e0e0e0;stroke-width:1;fill:none}
.pur{fill:#ab37bd}
.blu{fill:#4a7bd0}
.grn{fill:#43b097}
.lim{fill:#90b84c}
.wedge{stroke:#fff;stroke-width:1.500}
.ln-p,.ln-b{fill:none;stroke-width:2.500}
.ln-p{stroke:#a63fb9}
.ln-b{stroke:#4a7bd0}

/* sheet tabs */
.sheettabs{height:40px;display:flex;align-items:center;background:#eff0f1}
.nav{width:10px;height:16px;margin-left:31px}
.nav.n2{margin-left:30px}
.sheet-tab{margin-left:60px;width:111px;height:37px;margin-top:-3px;background:#fff;border-radius:0 0 6px 6px;padding:4px 0 0 10px;box-shadow:0 1px 2px rgba(0,0,0,.1);font-size:17px;line-height:24px;color:#222}
.sheet-tab span{display:inline-block;border-bottom:3px solid #0f6b46;padding-bottom:3px;width:91px;white-space:nowrap}
.tab-sep{width:1px;height:24px;background:#d0d0d0;margin-left:5px}
.plus{width:14px;height:14px;margin-left:53px}
.dots.d2{margin-left:828px;width:6px}
.arrow-left,.arrow-right{width:0;height:0;border-top:6px solid transparent;border-bottom:6px solid transparent}
.arrow-left{border-right:8px solid #5a5a5a;margin-left:25px}
.arrow-right{border-left:8px solid #5a5a5a;margin-left:19px}
.h-thumb{width:667px;height:11px;background:#707070;border-radius:6px;margin-left:3px}

/* status */
.status{height:27px;display:flex;align-items:center;background:#f5f5f5;font-size:12.500px;color:#333}
.ready{margin-left:14px;width:40px}
.st-ic{width:18px;height:18px}
.macro{margin-left:23px}
.st-ic.acc{margin-left:20px;width:20px;height:20px}
.acc-text{font-weight:600;margin-left:3px;white-space:nowrap;font-size:12.500px}
.views{margin-left:auto;display:flex;height:27px}
.view{width:50px;display:flex;align-items:center;justify-content:center}
.view.on{background:#dfdfdf}
.view svg{width:16px;height:16px}
.z-minus{width:9px;height:1px;background:#333;margin-left:12px}
.zoom-track{position:relative;width:125px;height:1px;background:#555;margin-left:6px}
.z-thumb{position:absolute;left:38px;top:-6px;width:6px;height:13px;background:#444}
.z-tick{position:absolute;left:62px;top:-3px;width:1px;height:7px;background:#777}
.z-plus{margin-left:5px;font-size:15px;width:14px}
.z-val{margin-left:9px;margin-right:12px;font-size:12.500px}

/* watermark */
.watermark{position:absolute;left:850px;top:893px;width:220px;height:127px;display:flex;flex-direction:column;align-items:center;pointer-events:none;color:rgba(222,222,222,.85)}
.wm-ar{font:700 82px/89px "DejaVu Sans",sans-serif;white-space:nowrap;transform:scaleX(.87)}
.wm-en{font:600 34px/36px "Noto Sans",sans-serif;white-space:nowrap}
```
